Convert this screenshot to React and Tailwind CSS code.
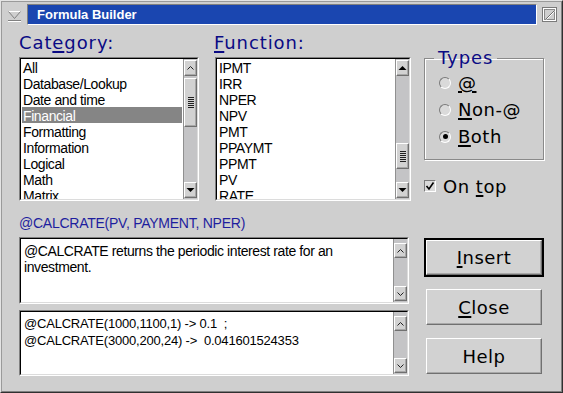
import React from "react";

const FL = "font-['DejaVu_Sans',sans-serif]";
const FS = "font-['Liberation_Sans',Arial,sans-serif]";

function Tri({ up }) {
  return (
    <svg width="9" height="6" viewBox="0 0 9 6">
      {up ? <polygon points="0.5,5 8.5,5 4.5,1" fill="#000" /> : <polygon points="0.5,1 8.5,1 4.5,5" fill="#000" />}
    </svg>
  );
}
function Chev({ up }) {
  return (
    <svg width="9" height="6" viewBox="0 0 9 6">
      {up ? (
        <polyline points="1.5,4.5 4.5,1.5 7.5,4.5" fill="none" stroke="#202020" strokeWidth="1" />
      ) : (
        <polyline points="1.5,1.5 4.5,4.5 7.5,1.5" fill="none" stroke="#202020" strokeWidth="1" />
      )}
    </svg>
  );
}

const raised =
  "border border-t-white border-l-white border-r-[#707070] border-b-[#707070] shadow-[inset_-1px_-1px_0_#a8a8a8] bg-[#d2d2d2]";

function SBtn({ children, h = "h-[16px]" }) {
  return <div className={`${h} w-full flex items-center justify-center ${raised}`}>{children}</div>;
}

function Grip() {
  return (
    <div className="flex flex-col gap-[1px] items-center">
      {[0, 1, 2, 3, 4, 5].map((i) => (
        <div key={i} className="w-[6px] h-[1px] bg-[#202020]" />
      ))}
    </div>
  );
}

function Sunken({ className = "", children }) {
  return (
    <div className={`border border-t-[#808080] border-l-[#808080] border-r-white border-b-white ${className}`}>
      <div className="h-full w-full border border-t-black border-l-black border-r-[#dcdcdc] border-b-[#dcdcdc] bg-white flex">
        {children}
      </div>
    </div>
  );
}

function ListBox({ items, selected, width, upKind, thumbTop, thumbH }) {
  return (
    <Sunken className={`${width} h-[144px]`}>
      <div className={`flex-1 overflow-hidden ${FS} text-[14px] tracking-[-0.4px] text-black`}>
        {items.map((it) => (
          <div
            key={it}
            className={`h-[16px] leading-[18px] mx-[1px] px-[1px] whitespace-nowrap ${it === selected ? "bg-[#858585] text-white" : ""}`}
          >
            {it}
          </div>
        ))}
      </div>
      <div className="w-[14px] border-l border-l-[#909090] bg-[#c4c4c6] flex flex-col py-[1px]">
        <SBtn>{upKind === "tri" ? <Tri up /> : <Chev up />}</SBtn>
        <div className="flex-1 flex flex-col">
          <div style={{ height: thumbTop }} />
          <div style={{ height: thumbH }} className={`w-full flex items-center justify-center ${raised}`}>
            <Grip />
          </div>
        </div>
        <SBtn>
          <Tri />
        </SBtn>
      </div>
    </Sunken>
  );
}

function TextBox({ lines, pt, leading, height, text }) {
  return (
    <Sunken className={`w-[390px] ${height}`}>
      <div className={`flex-1 ${FS} ${text} ${leading} ${pt} pl-[3px] text-black whitespace-pre`}>
        {lines.map((l, i) => (
          <div key={i}>{l}</div>
        ))}
      </div>
      <div className="w-[14px] border-l border-l-[#909090] bg-[#c4c4c6] flex flex-col justify-between pt-[4px] pb-[1px]">
        <SBtn h="h-[15px]">
          <Chev up />
        </SBtn>
        <SBtn h="h-[15px]">
          <Chev />
        </SBtn>
      </div>
    </Sunken>
  );
}

function Radio({ checked }) {
  return (
    <div className="w-[12px] h-[12px] rounded-full border border-t-[#7a7a7a] border-l-[#7a7a7a] border-r-white border-b-white bg-[#dadada] flex items-center justify-center">
      {checked && <div className="w-[5px] h-[5px] rounded-full bg-black" />}
    </div>
  );
}

function Button({ children, isDefault }) {
  const inner = (
    <div className={`w-[116px] ${isDefault ? "h-[35px]" : "h-[36px]"} flex items-center justify-center ${raised} ${FL} text-[18px] tracking-[0.5px] text-black`}>
      {children}
    </div>
  );
  if (isDefault) return <div className="border-2 border-black w-[120px] h-[39px]">{inner}</div>;
  return <div className="ml-[2px]">{inner}</div>;
}

export default function App() {
  const cats = ["All", "Database/Lookup", "Date and time", "Financial", "Formatting", "Information", "Logical", "Math", "Matrix"];
  const funcs = ["IPMT", "IRR", "NPER", "NPV", "PMT", "PPAYMT", "PPMT", "PV", "RATE"];
  const ul = "underline decoration-2 underline-offset-[2px]";
  const lbl = `${FL} text-[18px] leading-[22px] tracking-[0.9px] text-[#0a0a84] h-[22px]`;
  return (
    <div className="w-[563px] h-[393px] bg-[#cfcfcf] border border-t-[#e4e4e4] border-l-[#e4e4e4] border-r-[#303030] border-b-[#303030]">
      <div className="w-full h-full border border-t-[#9a9a9a] border-l-[#9a9a9a] border-r-[#808080] border-b-[#808080] flex flex-col">
        {/* title bar */}
        <div className="mt-[2px] h-[21px] flex">
          <div className="w-[25px] flex items-center justify-center">
            <svg width="15" height="14" viewBox="0 0 15 14">
              <polyline points="1.5,3.5 13.5,3.5" stroke="#ffffff" strokeWidth="1" />
              <polyline points="1.5,3.5 7.5,10.5 13.5,3.5" fill="none" stroke="#808080" strokeWidth="1" />
              <line x1="1" y1="12.5" x2="14" y2="12.5" stroke="#808080" strokeWidth="1" />
              <line x1="1" y1="13.5" x2="14" y2="13.5" stroke="#ffffff" strokeWidth="1" />
            </svg>
          </div>
          <div className={`flex-1 bg-[#1a46b0] border border-t-[#808080] border-l-[#808080] border-r-white border-b-white flex items-center pl-[9px] ${FS} font-bold text-[13px] text-white`}>
            Formula Builder
          </div>
          <div className="w-[24px] flex items-center justify-center">
            <svg width="15" height="15" viewBox="0 0 15 15">
              <rect x="0.5" y="0.5" width="14" height="14" fill="#cfcfcf" stroke="#7a7a7a" />
              <rect x="1.5" y="1.5" width="12" height="12" fill="none" stroke="#ffffff" />
              <rect x="2.5" y="2.5" width="10" height="10" fill="none" stroke="#8a8a8a" />
              <line x1="4" y1="12" x2="12" y2="4" stroke="#707070" strokeWidth="1" />
              <line x1="4.5" y1="12.5" x2="12.5" y2="4.5" stroke="#ffffff" strokeWidth="1" />
            </svg>
          </div>
        </div>

        {/* body */}
        <div className="flex pl-[17px] pt-[7px] gap-[15px]">
          {/* left column */}
          <div className="w-[390px] flex flex-col">
            <div className="flex gap-[16px]">
              <div className="flex flex-col">
                <div className={lbl}>
                  Cat<span className={ul}>e</span>gory:
                </div>
                <div className="mt-[3px]">
                  <ListBox items={cats} selected="Financial" width="w-[180px]" upKind="chev" thumbTop={2} thumbH={49} />
                </div>
              </div>
              <div className="flex flex-col">
                <div className={`${lbl} -ml-[1px]`}>
                  <span className={ul}>F</span>unction:
                </div>
                <div className="mt-[3px]">
                  <ListBox items={funcs} selected="" width="w-[196px]" upKind="tri" thumbTop={67} thumbH={26} />
                </div>
              </div>
            </div>
            <div className={`mt-[14px] ${FS} text-[14px] tracking-[-0.25px] leading-[16px] text-[#1e1e9e]`}>
              @CALCRATE(PV, PAYMENT, NPER)
            </div>
            <div className="mt-[6px]">
              <TextBox
                height="h-[67px]"
                pt="pt-[4px]"
                leading="leading-[16px]"
                text="text-[14px] tracking-[-0.4px]"
                lines={["@CALCRATE returns the periodic interest rate for an", "investment."]}
              />
            </div>
            <div className="mt-[6px]">
              <TextBox
                height="h-[66px]"
                pt="pt-[3px]"
                leading="leading-[17px]"
                text="text-[13px] tracking-[-0.2px]"
                lines={["@CALCRATE(1000,1100,1) -> 0.1  ;", "@CALCRATE(3000,200,24) ->  0.041601524353"]}
              />
            </div>
          </div>

          {/* right column */}
          <div className="w-[120px] flex flex-col mt-[15px]">
            <fieldset className="h-[113px] border border-[#8a8a8a] shadow-[1px_1px_0_white,inset_1px_1px_0_white] pl-[14px]">
              <legend className={`ml-[-5px] px-[4px] ${FL} text-[18px] leading-[22px] tracking-[0.9px] text-[#0a0a84]`}>
                Types
              </legend>
              <div className={`flex flex-col ${FL} text-[18px] tracking-[0.5px] text-black`}>
                <div className="h-[27px] flex items-center gap-[7px]">
                  <Radio />
                  <span className={ul}>@</span>
                </div>
                <div className="h-[27px] flex items-center gap-[7px]">
                  <Radio />
                  <span>
                    <span className={ul}>N</span>on-@
                  </span>
                </div>
                <div className="h-[27px] flex items-center gap-[7px]">
                  <Radio checked />
                  <span>
                    <span className={ul}>B</span>oth
                  </span>
                </div>
              </div>
            </fieldset>
            <div className={`mt-[15px] h-[22px] flex items-center gap-[7px] ${FL} text-[18px] tracking-[0.5px] text-black`}>
              <div className="w-[12px] h-[12px] border border-t-[#7a7a7a] border-l-[#7a7a7a] border-r-white border-b-white bg-[#dadada] flex items-center justify-center">
                <svg width="10" height="10" viewBox="0 0 10 10">
                  <polyline points="1.5,5 4,8 8.5,1.5" fill="none" stroke="#000" strokeWidth="1.6" />
                </svg>
              </div>
              <span>
                On <span className={ul}>t</span>op
              </span>
            </div>
            <div className="mt-[41px] flex flex-col">
              <Button isDefault>
                <span className={ul}>I</span>nsert
              </Button>
              <div className="mt-[12px]">
                <Button>
                  <span className={ul}>C</span>lose
                </Button>
              </div>
              <div className="mt-[13px]">
                <Button>Help</Button>
              </div>
            </div>
          </div>
        </div>
      </div>
    </div>
  );
}
